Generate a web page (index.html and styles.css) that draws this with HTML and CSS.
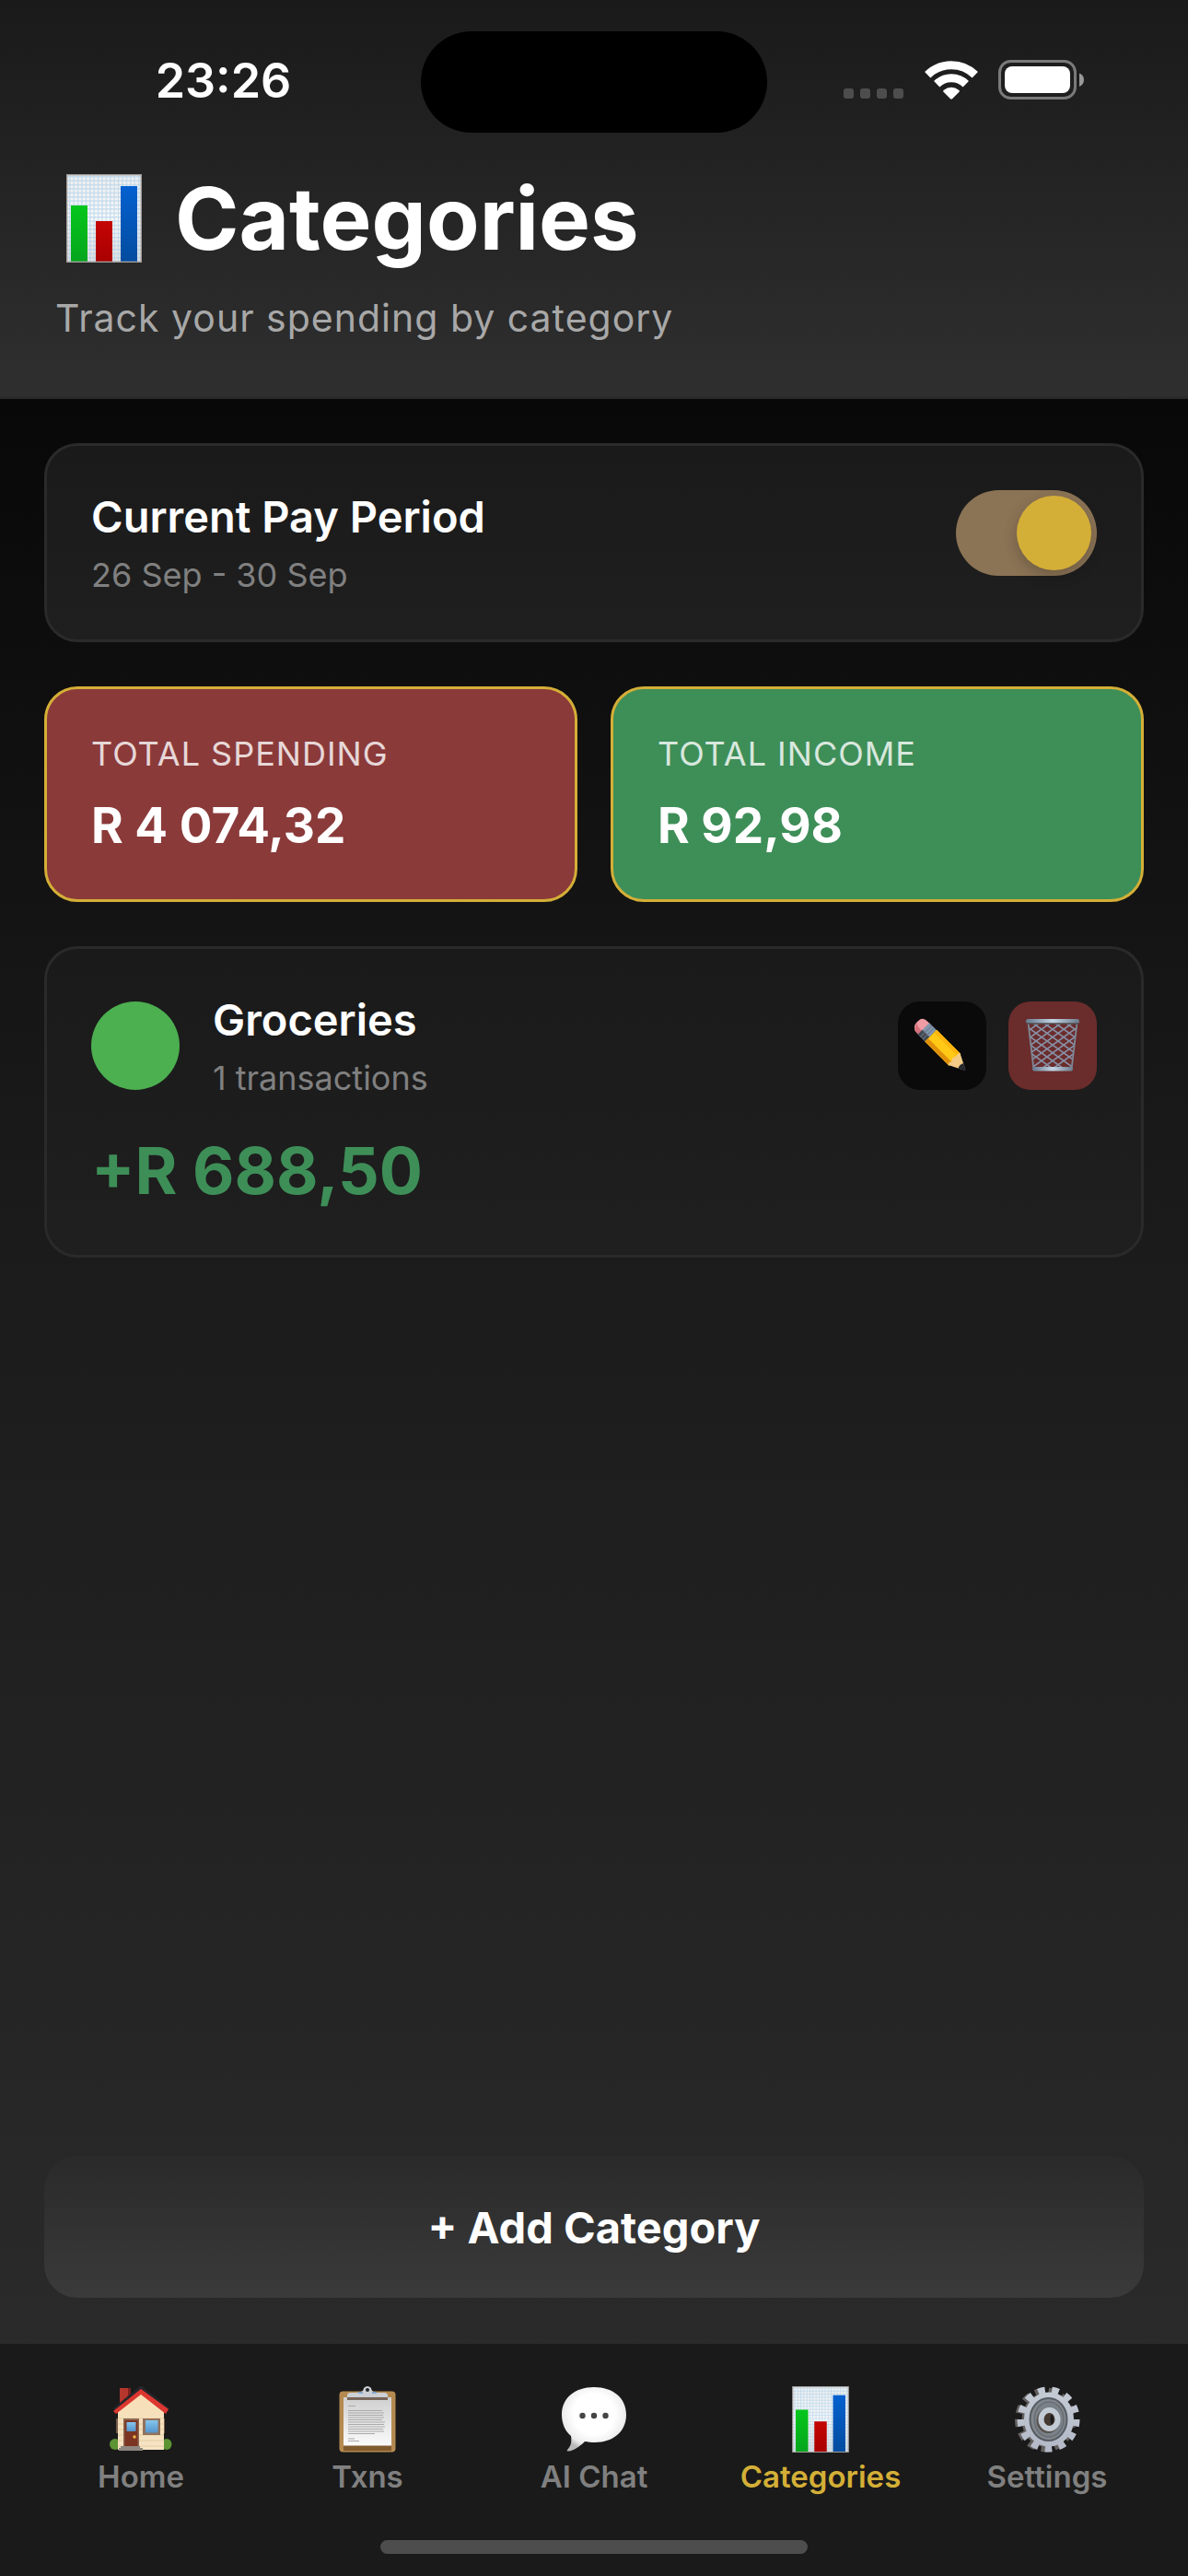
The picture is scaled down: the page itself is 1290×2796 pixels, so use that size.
FILE: index.html
```html
<!DOCTYPE html>
<html lang="en">
<head>
  <meta charset="utf-8">
  <meta name="viewport" content="width=device-width, initial-scale=1">
  <title>Categories</title>
  <link rel="stylesheet" href="styles.css">
</head>
<body>
  <svg class="sprite" aria-hidden="true">
    <defs>
      <linearGradient id="paper" x1="0" y1="0" x2="0" y2="1"><stop offset="0" stop-color="#f0efee"/><stop offset=".5" stop-color="#f9f8f8"/><stop offset="1" stop-color="#e2dfde"/></linearGradient>
      <linearGradient id="green" x1="0" y1="0" x2="0" y2="1"><stop offset="0" stop-color="#06c61c"/><stop offset="1" stop-color="#05a51c"/></linearGradient>
      <linearGradient id="red" x1="0" y1="0" x2="0" y2="1"><stop offset="0" stop-color="#c40505"/><stop offset="1" stop-color="#a90000"/></linearGradient>
      <linearGradient id="blue" x1="0" y1="0" x2="0" y2="1"><stop offset="0" stop-color="#0461d0"/><stop offset="1" stop-color="#034c9f"/></linearGradient>
      <pattern id="grid" x="3" y="2" width="4.4" height="4.4" patternUnits="userSpaceOnUse"><path d="M0 .8H4.4M.8 0V4.4" stroke="#a5cdea" stroke-width="1" opacity=".75"/></pattern>
      <linearGradient id="wall" x1="0" y1="0" x2="0" y2="1"><stop offset="0" stop-color="#f7dfb6"/><stop offset="1" stop-color="#f5e3c4"/></linearGradient>
      <linearGradient id="glass" x1="0" y1="0" x2="0" y2="1"><stop offset="0" stop-color="#86c6ee"/><stop offset="1" stop-color="#5594cc"/></linearGradient>
      <linearGradient id="sheet" x1="0" y1="0" x2="0" y2="1"><stop offset="0" stop-color="#cfcfcf"/><stop offset="1" stop-color="#fbfbfb"/></linearGradient>
      <radialGradient id="bubble" cx=".5" cy=".42" r=".58"><stop offset=".55" stop-color="#fff"/><stop offset=".85" stop-color="#ececec"/><stop offset="1" stop-color="#b9b9b9"/></radialGradient>
      <linearGradient id="steel" x1="0" y1="0" x2="0" y2="1"><stop offset="0" stop-color="#c3cad4"/><stop offset="1" stop-color="#b4bac8"/></linearGradient>
      <linearGradient id="rim" x1="0" y1="0" x2="1" y2="0"><stop offset="0" stop-color="#66788c"/><stop offset=".5" stop-color="#c3d4e4"/><stop offset="1" stop-color="#6b7a8a"/></linearGradient>
      <clipPath id="basket"><path d="M3 5H57L50.500 55H9z"/></clipPath>
    </defs>
    <symbol id="chart" viewBox="0 0 82 96">
      <rect x=".5" y=".5" width="81" height="95" fill="url(#paper)"/>
      <rect x="1" y="1" width="80" height="94" fill="url(#grid)"/>
      <rect x="5" y="34" width="18" height="61" fill="url(#green)"/>
      <rect x="32" y="51" width="18" height="44" fill="url(#red)"/>
      <rect x="59" y="13" width="18" height="82" fill="url(#blue)"/>
      <rect x=".7" y=".7" width="80.600" height="94.600" fill="none" stroke="#a09c9a" stroke-width="1.400"/>
    </symbol>
  </svg>

  <header class="header">
    <div class="status">
      <time class="clock">23:26</time>
      <span class="island"></span>
      <span class="signals" aria-hidden="true">
        <svg width="66" height="44" viewBox="0 0 66 44" fill="#4d4d4d"><rect y="31" width="11" height="11" rx="3"/><rect x="18" y="31" width="11" height="11" rx="3"/><rect x="36" y="31" width="11" height="11" rx="3"/><rect x="54" y="31" width="11" height="11" rx="3"/></svg>
        <svg width="58" height="44" viewBox="0 0 58 44"><g fill="none" stroke="#fff" stroke-width="9"><path d="M3.200 16.200A37 37 0 0 1 54.800 16.200"/><path d="M13.200 26.200A22.500 22.500 0 0 1 44.800 26.200"/></g><path d="M20.500 33Q29 26.500 37.500 33Q38.300 34 37.500 34.800L30 42.300Q29 43.200 28 42.300L20.500 34.800Q19.700 34 20.500 33Z" fill="#fff"/></svg>
        <svg width="94" height="44" viewBox="0 0 94 44"><rect x="1.500" y="1.500" width="82" height="40" rx="12" fill="none" stroke="#7a7a7a" stroke-width="3"/><rect x="7" y="7" width="71" height="29" rx="8" fill="#fff"/><path d="M88 14.500Q93 16.500 93 21.700T88 29z" fill="#999"/></svg>
      </span>
    </div>
    <h1 class="title"><svg class="title-icon" aria-hidden="true"><use href="#chart"/></svg>Categories</h1>
    <p class="subtitle">Track your spending by category</p>
  </header>

  <main class="content">
    <section class="card period">
      <div>
        <label class="heading" for="period">Current Pay Period</label>
        <p class="note">26 Sep - 30 Sep</p>
      </div>
      <input class="switch" id="period" type="checkbox" role="switch" checked>
    </section>

    <section class="totals">
      <div class="total spending">
        <p class="total-label">TOTAL SPENDING</p>
        <p class="total-value">R 4 074,32</p>
      </div>
      <div class="total income">
        <p class="total-label">TOTAL INCOME</p>
        <p class="total-value">R 92,98</p>
      </div>
    </section>

    <article class="card">
      <div class="category-head">
        <span class="dot"></span>
        <div class="category-text">
          <h2 class="heading">Groceries</h2>
          <p class="note">1 transactions</p>
        </div>
        <button class="action edit" type="button" aria-label="Edit">
          <svg width="60" height="60" viewBox="0 0 60 60" aria-hidden="true">
            <g transform="translate(8.500 10) rotate(45)">
              <path d="M0-8.500Q-8-8.500-8-2V0Q-8 7-2 8.500H3V-8.500Z" fill="#f19ca4"/>
              <path d="M-2 3Q-6 3-7 0Q-7 7-2 8.500H3V3Z" fill="#d4717b"/>
              <path d="M2-8.800H13V8.800H2Z" fill="#8396ad"/><path d="M2 2H13V8.800H2Z" fill="#444a52"/><path d="M6-8.800V8.800M9.500-8.800V8.800" stroke="#657487"/>
              <path d="M13-9H50V9H13Z" fill="#ffc916"/><path d="M13-9H50V-5H13Z" fill="#fbb50e"/><path d="M13 4H50V9H13Z" fill="#e0910b"/>
              <path d="M49-9L64-1.500Q66 0 64 1.500L49 9Q46 6 49 4Q45 0 49-4Q46-6 49-9Z" fill="#f2cb86"/>
              <path d="M59-4L66-.8Q67 0 66 .8L59 4Q57 0 59-4Z" fill="#25292f"/>
            </g>
          </svg>
        </button>
        <button class="action delete" type="button" aria-label="Delete">
          <svg width="60" height="60" viewBox="0 0 60 60" aria-hidden="true">
            <g clip-path="url(#basket)" fill="none" stroke="#8790a5" stroke-width="1.600">
              <path d="M-40 5L30 55M-28 5L42 55M-16 5L54 55M-4 5L66 55M8 5L78 55M20 5L90 55M32 5L102 55M44 5L114 55"/>
              <path d="M100 5L30 55M88 5L18 55M76 5L6 55M64 5L-6 55M52 5L-18 55M40 5L-30 55M28 5L-42 55M16 5L-54 55"/>
            </g>
            <path d="M3.500 5L9.500 56M56.500 5L50.500 56" stroke="#7e8796" stroke-width="1.800"/>
            <rect x="8" y="53" width="44" height="4.500" rx="2" fill="url(#rim)"/>
            <rect x="1" y="1" width="58" height="5" rx="2.500" fill="url(#rim)"/><path d="M2 6H58" stroke="#4e4b4d" stroke-width="1.500"/>
          </svg>
        </button>
      </div>
      <p class="amount">+R 688,50</p>
    </article>

    <button class="add" type="button">+ Add Category</button>
  </main>

  <nav class="tabs">
    <a class="tab" href="#home">
      <svg class="tab-icon" viewBox="0 0 72 72" aria-hidden="true">
        <path d="M13 2H25V18L13 26Z" fill="#b5362d"/><path d="M22 2H25V16L22 19Z" fill="#7c211e"/>
        <ellipse cx="8" cy="63" rx="6" ry="6" fill="#5c9434"/><ellipse cx="64" cy="63" rx="5.500" ry="6" fill="#5c9434"/>
        <path d="M9 35H13V51H9ZM59 35H62V51H59Z" fill="#765b48"/>
        <path d="M11 28L36 7L61 28V69H11Z" fill="url(#wall)"/>
        <path d="M11 35H61M11 41H61M11 47H61M11 53H61M11 59H61M11 65H61" stroke="#dfc49a" stroke-width=".7"/>
        <path d="M6 24L36-1L67 24L65 27L36 4L9 27Z" fill="#25262b"/>
        <path d="M36 3L66 25L63 30L36 9L9 30L6 27Z" fill="#dc3730"/>
        <rect x="17" y="35" width="17" height="31" fill="#8d6752"/><rect x="18.500" y="37" width="14" height="29" fill="#7c3522"/><rect x="20.500" y="39" width="10" height="10" fill="url(#glass)"/><circle cx="29" cy="55" r="1.700" fill="#f6bb43"/>
        <rect x="38" y="35" width="19" height="18" fill="#92725c"/><rect x="41" y="37" width="13.500" height="13.500" fill="url(#glass)"/>
        <path d="M14 65H35V67H38V70H12V67H14Z" fill="#8e8780"/>
      </svg>
      Home
    </a>
    <a class="tab" href="#transactions">
      <svg class="tab-icon" viewBox="0 0 72 72" aria-hidden="true">
        <rect x="5.500" y="5.500" width="61" height="66" rx="4" fill="#b58a50"/><path d="M10 60H62V70H10Z" fill="#805b2d"/>
        <rect x="10" y="12" width="52" height="52.500" fill="url(#sheet)"/>
        <path d="M15 21.500H23M15 26.500H52M15 29H54M15 31.500H53M15 34H54M15 36.500H52M15 39H55M15 41.500H54M15 44H55M15 46.500H53M15 49H54M15 51.500H44M15 57H22M15 59.500H27" stroke="#aaa" stroke-width="1"/>
        <path d="M14 13V10Q14 7 18 7H26Q32 6 32 2Q36-2 40 2Q40 6 46 7H54Q58 7 58 10V13Z" fill="#cdd0d5"/><path d="M14 12H58V15H14Z" fill="#77665a"/><circle cx="36" cy="4" r="2" fill="#22252a"/><path d="M26 7H31M41 7H46" stroke="#87a8cd" stroke-width="2"/>
      </svg>
      Txns
    </a>
    <a class="tab" href="#chat">
      <svg class="tab-icon" viewBox="0 0 72 72" aria-hidden="true">
        <path d="M36 1C57 1 71 13 71 31C71 49 57 61 37 61C33 61 29 60.500 26 60C20 66 14 70 8 70.500C6 70.500 6.500 69.500 7.500 68.500C11 65 12 60 11 54C5 49 1 41 1 31C1 13 15 1 36 1Z" fill="url(#bubble)"/>
        <circle cx="23.500" cy="32" r="3.200" fill="#454545"/><circle cx="36" cy="32" r="3.200" fill="#454545"/><circle cx="48.500" cy="32" r="3.200" fill="#454545"/>
      </svg>
      AI Chat
    </a>
    <a class="tab active" href="#categories" aria-current="page">
      <svg class="tab-icon" aria-hidden="true"><use href="#chart"/></svg>
      Categories
    </a>
    <a class="tab" href="#settings">
      <svg class="tab-icon" viewBox="0 0 72 72" aria-hidden="true">
        <g fill="none" stroke="#63605f"><ellipse cx="34" cy="36.500" rx="29" ry="31" stroke-width="8" pathLength="130" stroke-dasharray="5.500 4.500"/><ellipse cx="35" cy="36.500" rx="22" ry="25" stroke-width="9"/></g>
        <g fill="none" stroke="url(#steel)"><ellipse cx="37.500" cy="36" rx="30" ry="31.500" stroke-width="8" pathLength="130" stroke-dasharray="5 5"/><ellipse cx="38" cy="36" rx="23" ry="25.500" stroke-width="8"/></g>
        <ellipse cx="37.500" cy="36" rx="20" ry="23" fill="#83888f" stroke="#585d64" stroke-width="2"/>
        <ellipse cx="38" cy="36" rx="16" ry="19" fill="#7b8188" stroke="#686d73" stroke-width="1.500"/>
        <ellipse cx="37" cy="37.500" rx="12.500" ry="13.500" fill="#57534f"/>
        <ellipse cx="38.500" cy="36" rx="9" ry="10" fill="#443a32" stroke="#c3cbd4" stroke-width="6"/>
        <path d="M41 30Q45 36 41 42Q38 36 41 30Z" fill="#191a1c"/>
      </svg>
      Settings
    </a>
  </nav>
  <footer class="home-bar"><span class="home-indicator"></span></footer>
</body>
</html>
```
FILE: styles.css
```css
* {
  box-sizing: border-box;
}

body {
  display: flex;
  flex-direction: column;
  min-height: 100vh;
  margin: 0;
  background: #1a1a1a;
  color: #fff;
  font-family: Inter, "Liberation Sans", sans-serif;
  font-size: 36px;
}

h1, h2, p {
  margin: 0;
}

button, input {
  margin: 0;
  padding: 0;
  border: 0;
  font: inherit;
  color: inherit;
}

svg {
  display: block;
  flex: none;
}

.sprite {
  position: absolute;
  width: 0;
  height: 0;
}

/* Header */
.header {
  padding: 0 60px 60px;
  border-bottom: 3px solid #2a2a2a;
  background: linear-gradient(#1a1a1a, #2f2f2f);
}

.status {
  display: grid;
  grid-template-columns: 1fr 376px 1fr;
  align-items: center;
  height: 178px;
  margin: 0 -60px;
}

.clock {
  align-self: start;
  margin-top: 56px;
  padding-left: 28px;
  font-size: 52px;
  font-weight: 600;
  line-height: 64px;
  text-align: center;
}

.island {
  height: 110px;
  border-radius: 55px;
  background: #000;
}

.signals {
  display: flex;
  align-self: start;
  justify-content: center;
  gap: 22px;
  margin-top: 65px;
  padding-right: 30px;
}

.title {
  display: flex;
  align-items: center;
  gap: 36px;
  padding-left: 12px;
  font-size: 94px;
  font-weight: 700;
  line-height: 118px;
}

.title-icon {
  width: 82px;
  height: 96px;
}

.subtitle {
  margin-top: 24px;
  color: #a8a8a8;
  font-size: 41px;
  line-height: 50px;
  letter-spacing: 1px;
}

/* Content */
.content {
  display: flex;
  flex: 1;
  flex-direction: column;
  gap: 48px;
  padding: 48px 48px 50px;
  background: linear-gradient(#080808, #1a1a1a 40%, #2a2a2a);
}

.card {
  padding: 48px;
  border: 3px solid #2a2a2a;
  border-radius: 36px;
  background: linear-gradient(#1a1a1a, #1f1f1f);
}

.period {
  display: flex;
  align-items: flex-start;
  justify-content: space-between;
}

.heading {
  display: block;
  font-size: 47px;
  font-weight: 600;
  line-height: 58px;
}

.note {
  margin-top: 12px;
  color: #808080;
  font-size: 36px;
  line-height: 44px;
}

.switch {
  display: flex;
  align-items: center;
  justify-content: flex-end;
  width: 153px;
  height: 93px;
  padding: 6px;
  border-radius: 47px;
  appearance: none;
  background: #8b7355;
}

.switch::before {
  width: 81px;
  height: 81px;
  border-radius: 50%;
  background: #d4af37;
  box-shadow: 0 6px 16px rgb(0 0 0 / 20%);
  content: "";
}

.switch:not(:checked) {
  justify-content: flex-start;
}

.totals {
  display: grid;
  grid-template-columns: 1fr 1fr;
  gap: 36px;
}

.total {
  padding: 48px;
  border: 3px solid #d4af37;
  border-radius: 36px;
}

.spending {
  background: #8b3a3a;
}

.income {
  background: #3e8e58;
}

.total-label {
  font-size: 36px;
  line-height: 44px;
  letter-spacing: 1px;
  opacity: .8;
}

.total-value {
  margin-top: 24px;
  font-size: 53px;
  font-weight: 700;
  line-height: 64px;
}

.category-head {
  display: flex;
  align-items: center;
  gap: 24px;
}

.category-text {
  flex: 1;
  padding-left: 12px;
}

.dot {
  width: 96px;
  height: 96px;
  border-radius: 50%;
  background: #4caf50;
}

.action {
  display: grid;
  place-items: center;
  width: 96px;
  height: 96px;
  border-radius: 24px;
}

.edit {
  background: #0a0a0a;
}

.delete {
  background: #6b2c2c;
}

.amount {
  margin-top: 36px;
  color: #3e8e58;
  font-size: 70px;
  font-weight: 700;
  line-height: 86px;
}

.add {
  height: 154px;
  margin-top: auto;
  border-radius: 36px;
  background: linear-gradient(#2a2a2a, #3a3a3a);
  font-size: 47px;
  font-weight: 700;
}

/* Tab bar */
.tabs {
  display: grid;
  grid-template-columns: repeat(5, 1fr);
  padding: 46px 30px 0;
}

.tab {
  display: flex;
  flex-direction: column;
  align-items: center;
  gap: 6px;
  color: #808080;
  font-size: 33px;
  font-weight: 600;
  line-height: 40px;
  text-decoration: none;
}

.tab.active {
  color: #d4af37;
}

.tab-icon {
  width: 72px;
  height: 72px;
}

.home-bar {
  display: flex;
  justify-content: center;
  padding: 49px 0 24px;
}

.home-indicator {
  width: 36%;
  height: 15px;
  border-radius: 8px;
  background: #4d4d4d;
}
```
